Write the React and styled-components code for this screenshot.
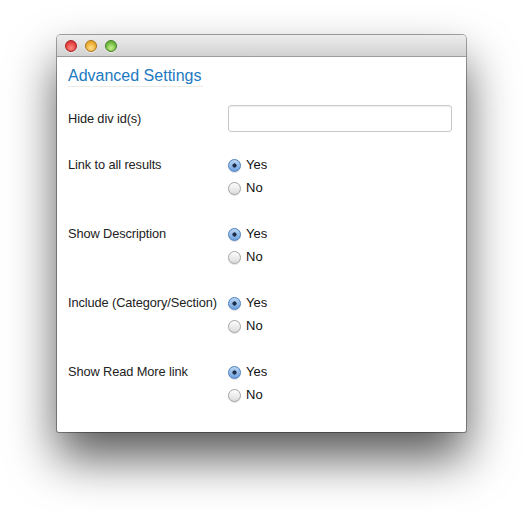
import React from "react";
import styled, { createGlobalStyle } from "styled-components";

const fields = [
	{ label: "Link to all results", name: "link" },
	{ label: "Show Description", name: "desc" },
	{ label: "Include (Category/Section)", name: "include" },
	{ label: "Show Read More link", name: "readmore" },
];

export default function App() {
	return (
		<Page>
			<GlobalStyle />
			<Window>
				<TitleBar>
					<Light color="red" />
					<Light color="yellow" />
					<Light color="green" />
				</TitleBar>
				<Content>
					<Heading>Advanced Settings</Heading>
					<Form>
						<Row first>
							<Label center>Hide div id(s)</Label>
							<TextInput type="text" />
						</Row>
						{fields.map((f) => (
							<Row key={f.name}>
								<Label>{f.label}</Label>
								<Options>
									<Option>
										<Radio type="radio" name={f.name} defaultChecked />
										Yes
									</Option>
									<Option>
										<Radio type="radio" name={f.name} />
										No
									</Option>
								</Options>
							</Row>
						))}
					</Form>
				</Content>
			</Window>
		</Page>
	);
}

const GlobalStyle = createGlobalStyle`
	body {
		margin: 0;
		background: #fff;
		font-family: "Liberation Sans", Arial, sans-serif;
	}
`;

const Page = styled.div`
	width: 523px;
	height: 511px;
	padding: 35px 0 0 57px;
	box-sizing: border-box;
	overflow: hidden;
`;

const Window = styled.div`
	width: 409px;
	background: #fff;
	border-radius: 4px 4px 2px 2px;
	box-shadow: 0 0 0 1px rgba(0, 0, 0, 0.35), 0 26px 48px rgba(0, 0, 0, 0.65);
	overflow: hidden;
`;

const TitleBar = styled.div`
	height: 22px;
	display: flex;
	align-items: center;
	gap: 8px;
	padding-left: 8px;
	background: linear-gradient(#ececec, #d2d2d2);
	border-bottom: 1px solid #9c9c9c;
	box-sizing: border-box;
`;

const lightColors = {
	red: ["#ff8a80", "#e0393a", "#a3201f"],
	yellow: ["#ffe08a", "#e9a72a", "#a8731a"],
	green: ["#c4f08a", "#6ab33b", "#3f7d20"],
};

const Light = styled.span`
	width: 12px;
	height: 12px;
	border-radius: 50%;
	box-sizing: border-box;
	border: 1px solid ${(p) => lightColors[p.color][2]};
	background: radial-gradient(
		circle at 50% 70%,
		${(p) => lightColors[p.color][0]} 0%,
		${(p) => lightColors[p.color][1]} 70%
	);
	box-shadow: 0 1px 0 rgba(255, 255, 255, 0.6);
`;

const Content = styled.div`
	padding: 8px 14px 26px 11px;
`;

const Heading = styled.h2`
	display: inline-block;
	margin: 0;
	padding-right: 2px;
	font-size: 16px;
	line-height: 21px;
	font-weight: normal;
	color: #2179c0;
	border-bottom: 1px solid #ecebe6;
`;

const Form = styled.div`
	display: flex;
	flex-direction: column;
	gap: 23px;
	margin-top: 18px;
`;

const Row = styled.div`
	display: grid;
	grid-template-columns: 160px 1fr;
	align-items: start;
	margin-bottom: ${(p) => (p.first ? "-2px" : "0")};
`;

const Label = styled.div`
	font-size: 12.8px;
	line-height: ${(p) => (p.center ? "27px" : "23px")};
	color: #222;
	white-space: nowrap;
	letter-spacing: -0.1px;
`;

const TextInput = styled.input`
	width: 224px;
	height: 27px;
	box-sizing: border-box;
	border: 1px solid #c9c9c9;
	border-radius: 3px;
	box-shadow: inset 0 1px 1px rgba(0, 0, 0, 0.06);
	outline: none;
`;

const Options = styled.div`
	display: flex;
	flex-direction: column;
`;

const Option = styled.label`
	display: flex;
	align-items: center;
	height: 23px;
	font-size: 13px;
	color: #111;
`;

const Radio = styled.input`
	appearance: none;
	-webkit-appearance: none;
	margin: 2px 5px 0 0;
	width: 13px;
	height: 13px;
	border-radius: 50%;
	box-sizing: border-box;
	border: 1px solid #a4a4a4;
	background: linear-gradient(#fdfdfd, #dcdcdc);
	box-shadow: 0 1px 1px rgba(0, 0, 0, 0.12);

	&:checked {
		border-color: #4a7fbf;
		background: radial-gradient(circle, #1d2f4c 0 1.8px, transparent 2.4px),
			linear-gradient(#bcd6f3, #6fa2dd);
	}
`;
